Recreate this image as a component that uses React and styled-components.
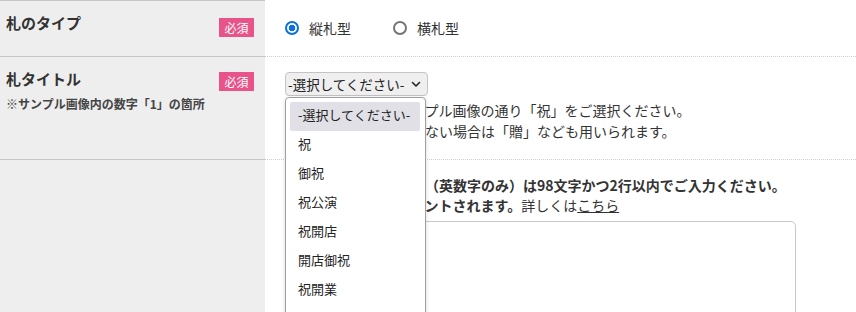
import React from "react";
import styled, { createGlobalStyle } from "styled-components";

const Global = createGlobalStyle`
  html, body { margin: 0; padding: 0; background: #fff; }
  body {
    font-family: "Noto Sans CJK JP", "Noto Sans", sans-serif;
    color: #333;
    font-size: 14px;
  }
`;

const Table = styled.div`
  width: 856px;
  display: flex;
  flex-direction: column;
`;

const Row = styled.div`
  display: flex;
  align-items: stretch;
`;

const Label = styled.div`
  width: 265px;
  flex: none;
  box-sizing: border-box;
  background: #eeeeee;
  padding: ${(p) => p.$pad || "12px 11px 0 6px"};
  border-top: ${(p) => (p.$first ? "1px solid #c6c6c6" : "none")};
  border-bottom: ${(p) => (p.$last ? "none" : "1px solid #c6c6c6")};
  min-height: ${(p) => p.$h || "auto"};
`;

const LabelHead = styled.div`
  display: flex;
  justify-content: space-between;
  align-items: flex-start;
`;

const LabelTitle = styled.div`
  font-size: 15px;
  font-weight: bold;
  color: #333;
  line-height: 20px;
`;

const Badge = styled.span`
  background: #e8548a;
  color: #fff;
  font-size: 12px;
  width: 35px;
  height: 19px;
  line-height: 19px;
  text-align: center;
  margin-top: ${(p) => p.$mt || "4px"};
`;

const Note = styled.div`
  font-size: 12px;
  font-weight: bold;
  color: #444;
  margin-top: 4px;
  line-height: 18px;
`;

const Content = styled.div`
  flex: 1;
  box-sizing: border-box;
  padding: ${(p) => p.$pad || "0 0 0 20px"};
  border-bottom: ${(p) => (p.$last ? "none" : "1px dotted #cfcfcf")};
  border-top: ${(p) => (p.$first ? "1px solid transparent" : "none")};
  position: relative;
`;

const Radios = styled.div`
  display: flex;
  align-items: center;
  gap: 42px;
  height: 55px;
  box-sizing: border-box;
`;

const RadioLabel = styled.label`
  display: flex;
  align-items: center;
  gap: 10px;
  font-size: 14px;
  color: #333;
`;

const Radio = styled.input`
  appearance: none;
  margin: 0;
  width: 14px;
  height: 14px;
  box-sizing: border-box;
  border-radius: 50%;
  border: 2px solid #767676;
  background: #fff;
  &:checked {
    border-color: #0b6fe0;
    background: radial-gradient(circle, #0b6fe0 0 3px, #fff 3.6px);
  }
`;

const SelectWrap = styled.div`
  position: relative;
  width: 143px;
`;

const SelectBox = styled.div`
  height: 24px;
  box-sizing: border-box;
  border: 1px solid #c4c4c4;
  border-radius: 4px;
  background: #efefef;
  display: flex;
  align-items: center;
  justify-content: space-between;
  padding: 0 6px 0 2px;
  font-size: 13.5px;
  color: #222;
  white-space: nowrap;
`;

const Dropdown = styled.ul`
  position: absolute;
  top: calc(100% + 1px);
  left: 0;
  width: 141px;
  box-sizing: border-box;
  margin: 0;
  padding: 4px 5px 4px 4px;
  list-style: none;
  background: #fff;
  border: 1px solid #a0a0a0;
  border-radius: 4px;
  box-shadow: 0 1px 4px rgba(0, 0, 0, 0.15);
  z-index: 5;
`;

const Option = styled.li`
  height: 29px;
  line-height: 26px;
  padding-left: 8px;
  font-size: 13px;
  color: #222;
  border-radius: 2px;
  white-space: nowrap;
  background: ${(p) => (p.$active ? "#e1e0e6" : "transparent")};
`;

const Desc = styled.p`
  margin: 4px 0 0;
  font-size: 14px;
  line-height: 21px;
  color: #333;
`;

const Guide = styled.div`
  padding-top: 15px;
  font-size: 14px;
  line-height: 20px;
  color: #333;
`;

const Strong = styled.span`
  font-weight: bold;
`;

const Link = styled.a`
  color: #333;
  text-decoration: underline;
`;

const TextArea = styled.div`
  margin-top: 6px;
  width: 511px;
  height: 110px;
  box-sizing: border-box;
  border: 1px solid #c8c8c8;
  border-radius: 5px;
  background: #fff;
`;

const Chevron = () => (
  <svg width="10" height="7" viewBox="0 0 10 7">
    <path d="M1.5 1.5 L5 5 L8.5 1.5" fill="none" stroke="#222" strokeWidth="1.6" strokeLinecap="round" strokeLinejoin="round" />
  </svg>
);

const options = ["-選択してください-", "祝", "御祝", "祝公演", "祝開店", "開店御祝", "祝開業", "祝開館"];

export default function App() {
  return (
    <>
      <Global />
      <Table>
        <Row>
          <Label $first $h="57px">
            <LabelHead>
              <LabelTitle>札のタイプ</LabelTitle>
              <Badge $mt="5px">必須</Badge>
            </LabelHead>
          </Label>
          <Content>
            <Radios>
              <RadioLabel>
                <Radio type="radio" name="type" defaultChecked />
                縦札型
              </RadioLabel>
              <RadioLabel>
                <Radio type="radio" name="type" />
                横札型
              </RadioLabel>
            </Radios>
          </Content>
        </Row>
        <Row>
          <Label $h="103px">
            <LabelHead>
              <LabelTitle>札タイトル</LabelTitle>
              <Badge $mt="3px">必須</Badge>
            </LabelHead>
            <Note>※サンプル画像内の数字「1」の箇所</Note>
          </Label>
          <Content $pad="15px 0 16px 20px">
            <SelectWrap>
              <SelectBox>
                -選択してください-
                <Chevron />
              </SelectBox>
              <Dropdown>
                {options.map((o, i) => (
                  <Option key={o} $active={i === 0}>{o}</Option>
                ))}
              </Dropdown>
            </SelectWrap>
            <Desc>
              「１」の部分は、サンプル画像の通り「祝」をご選択ください。
              <br />
              ※「祝」がふさわしくない場合は「贈」なども用いられます。
            </Desc>
          </Content>
        </Row>
        <Row>
          <Label $last $h="160px" />
          <Content $last>
            <Guide>
              <Strong>漢字・ひらがな・半角（英数字のみ）は98文字かつ2行以内でご入力ください。</Strong>
              <br />
              <Strong>改行も文字としてカウントされます。</Strong>詳しくは<Link href="#">こちら</Link>
            </Guide>
            <TextArea />
          </Content>
        </Row>
      </Table>
    </>
  );
}
